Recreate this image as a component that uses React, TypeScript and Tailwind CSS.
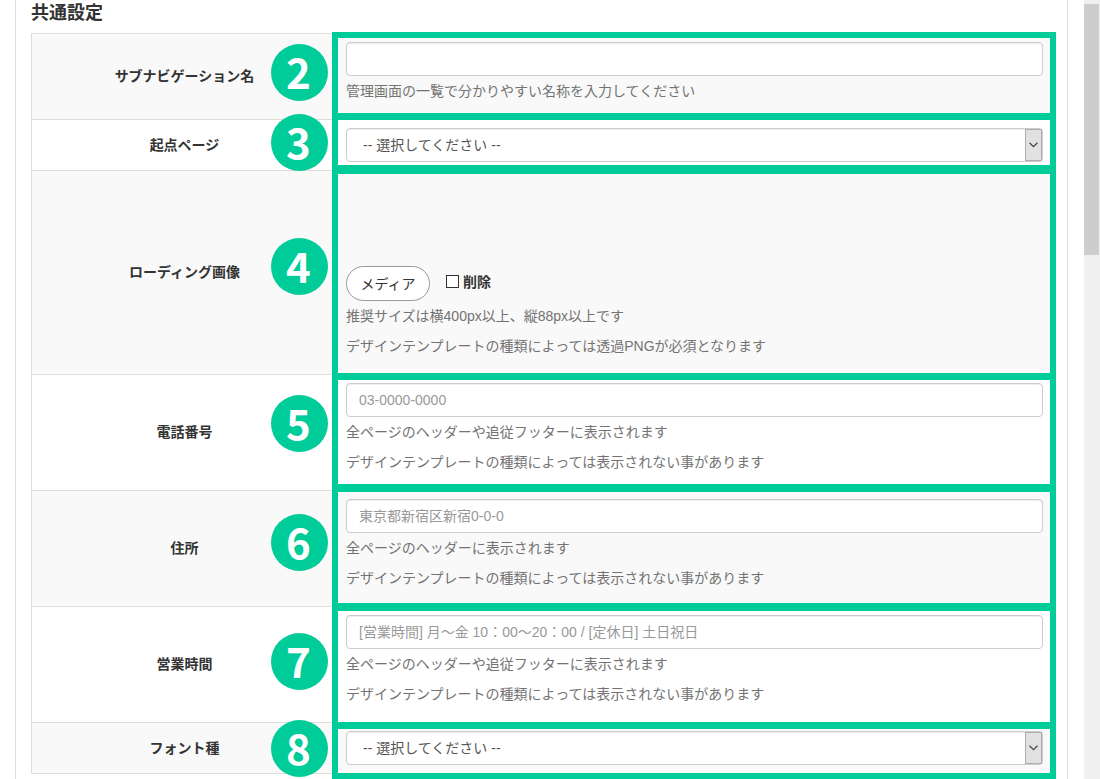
import React from "react";

const CONTROL =
  "block h-[34px] w-full rounded border border-[#ccc] bg-white text-sm text-[#555] shadow-[inset_0_1px_1px_rgba(0,0,0,0.075)] outline-none focus:border-[#66afe9]";

function Help({ lines }: { lines: string[] }) {
  return (
    <div className="mt-[5px] flex flex-col gap-[10px] pb-[10px] text-[#737373]">
      {lines.map((line) => (
        <p key={line}>{line}</p>
      ))}
    </div>
  );
}

function TextField({ id, placeholder }: { id: string; placeholder?: string }) {
  return (
    <input
      id={id}
      type="text"
      placeholder={placeholder}
      className={`${CONTROL} px-3 placeholder:text-[#999]`}
    />
  );
}

function SelectField({ id }: { id: string }) {
  return (
    <div className="relative">
      <select id={id} className={`${CONTROL} appearance-none pr-6 pl-4`}>
        <option>-- 選択してください --</option>
      </select>
      <span className="pointer-events-none absolute inset-y-px right-px flex w-[17px] items-center justify-center border border-[#adadad] bg-[#e1e1e1]">
        <svg width="9" height="6" viewBox="0 0 9 6" fill="none" stroke="#444" strokeWidth="1.2">
          <path d="M0.5 0.8 4.5 4.6 8.5 0.8" />
        </svg>
      </span>
    </div>
  );
}

function Row({ id, label, children }: { id: string; label: string; children: React.ReactNode }) {
  return (
    <tr className="odd:bg-[#f9f9f9]">
      <th scope="row" className="w-[306px] border-t border-l border-[#ddd] px-2 pt-[7px] pb-2 text-center align-middle font-bold">
        <label htmlFor={id}>{label}</label>
      </th>
      <td className="border-t border-l border-[#ddd] p-2 align-top">{children}</td>
    </tr>
  );
}

const FRAMES = [
  "h-[88px] border-t-[6px] border-b-[7px]",
  "h-[54px] border-b-[9px]",
  "h-[206px] border-b-[7px]",
  "h-[112px] border-b-[8px]",
  "h-[119px] border-b-[8px]",
  "h-[118px] border-b-[7px]",
  "h-[50px] border-b-[6px]",
];

const BADGES = [
  { number: 2, top: "top-[11px]" },
  { number: 3, top: "top-[81px]" },
  { number: 4, top: "top-[205px]" },
  { number: 5, top: "top-[362px]" },
  { number: 6, top: "top-[481px]" },
  { number: 7, top: "top-[600px]" },
  { number: 8, top: "top-[687px]" },
];

function Annotations() {
  return (
    <>
      <div className="pointer-events-none absolute -top-px -right-1 left-[301px] flex flex-col">
        {FRAMES.map((frame) => (
          <div key={frame} className={`border-x-[6px] border-[#00cc99] ${frame}`} />
        ))}
      </div>
      {BADGES.map(({ number, top }) => (
        <span
          key={number}
          className={`absolute left-[240px] flex size-[57px] items-center justify-center rounded-full bg-[#00cc99] pr-0.5 pb-1 font-['Noto_Sans_CJK_JP',sans-serif] text-[42px] leading-none font-bold text-white ${top}`}
        >
          {number}
        </span>
      ))}
    </>
  );
}

export default function App() {
  return (
    <div className="flex h-screen overflow-hidden bg-white pl-[15px] font-['Liberation_Sans','Noto_Sans_CJK_JP',sans-serif] text-sm leading-5 text-[#333]">
      <main className="mr-4 min-w-0 flex-1 border-x border-[#ddd] px-[15px]">
        <h2 className="h-[33px] pt-[3px] text-lg leading-5 font-bold">共通設定</h2>
        <form className="relative">
          <table className="w-full table-fixed border-separate border-spacing-0 border-r border-b border-[#ddd]">
            <tbody>
              <Row id="name" label="サブナビゲーション名">
                <TextField id="name" />
                <Help lines={["管理画面の一覧で分かりやすい名称を入力してください"]} />
              </Row>
              <Row id="origin" label="起点ページ">
                <SelectField id="origin" />
              </Row>
              <Row id="loading" label="ローディング画像">
                <div className="flex items-center gap-4 pt-[87px]">
                  <button
                    id="loading"
                    type="button"
                    className="h-[35px] w-[84px] rounded-full border border-[#999] bg-white"
                  >
                    メディア
                  </button>
                  <label className="flex items-center gap-1 pb-1 font-bold">
                    <input
                      type="checkbox"
                      className="size-[13px] appearance-none border border-[#333] bg-white checked:bg-[#333]"
                    />
                    削除
                  </label>
                </div>
                <Help
                  lines={[
                    "推奨サイズは横400px以上、縦88px以上です",
                    "デザインテンプレートの種類によっては透過PNGが必須となります",
                  ]}
                />
              </Row>
              <Row id="tel" label="電話番号">
                <TextField id="tel" placeholder="03-0000-0000" />
                <Help
                  lines={[
                    "全ページのヘッダーや追従フッターに表示されます",
                    "デザインテンプレートの種類によっては表示されない事があります",
                  ]}
                />
              </Row>
              <Row id="address" label="住所">
                <TextField id="address" placeholder="東京都新宿区新宿0-0-0" />
                <Help
                  lines={[
                    "全ページのヘッダーに表示されます",
                    "デザインテンプレートの種類によっては表示されない事があります",
                  ]}
                />
              </Row>
              <Row id="hours" label="営業時間">
                <TextField id="hours" placeholder="[営業時間] 月～金 10：00～20：00 / [定休日] 土日祝日" />
                <Help
                  lines={[
                    "全ページのヘッダーや追従フッターに表示されます",
                    "デザインテンプレートの種類によっては表示されない事があります",
                  ]}
                />
              </Row>
              <Row id="font" label="フォント種">
                <SelectField id="font" />
              </Row>
            </tbody>
          </table>
          <Annotations />
        </form>
      </main>
      <div className="w-4 bg-[#f0f0f0] pt-1 pr-px">
        <div className="h-[251px] bg-[#cdcdcd]" />
      </div>
    </div>
  );
}
